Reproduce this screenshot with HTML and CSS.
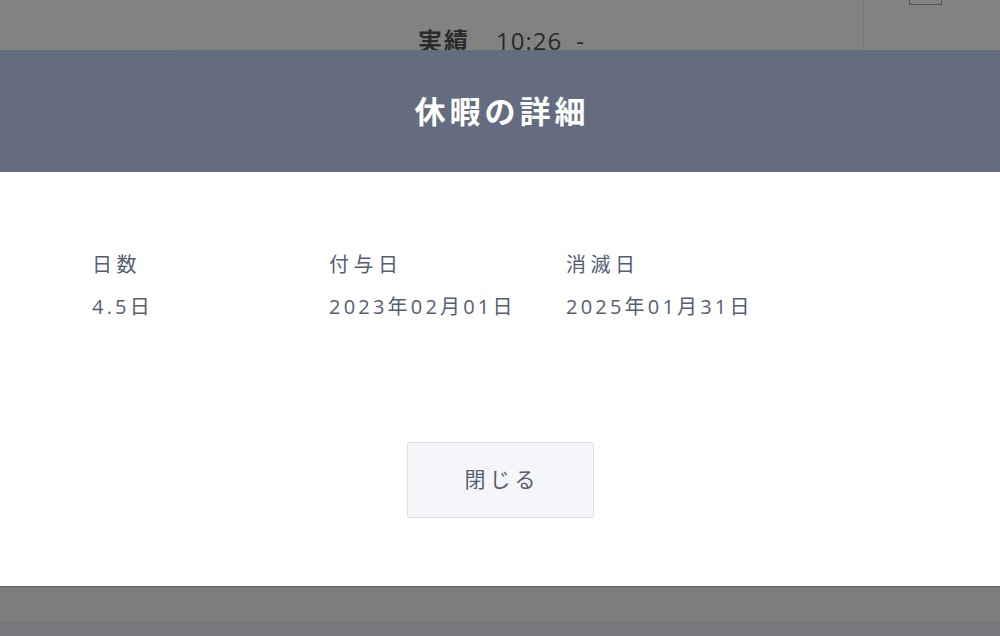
FILE: index.html
```html
<!DOCTYPE html>
<html lang="ja">
<head>
<meta charset="utf-8">
<link rel="stylesheet" href="styles.css">
</head>
<body>
<div class="page">
  <div class="side"></div>
  <div class="main">
    <div class="actual"><span class="lbl">実績</span><span class="time">10:26</span><span class="dash">-</span></div>
  </div>
  <div class="gap-col"></div>
  <div class="right">
    <div class="mini-icon"></div>
  </div>
</div>
<div class="bottom-area"><div class="bottom-strip"></div></div>
<div class="modal">
  <div class="modal-head">休暇の詳細</div>
  <div class="modal-body">
    <div class="fields">
      <div class="field f1">
        <div class="f-label">日数</div>
        <div class="f-value">4.5日</div>
      </div>
      <div class="field f2">
        <div class="f-label">付与日</div>
        <div class="f-value">2023年02月01日</div>
      </div>
      <div class="field f3">
        <div class="f-label">消滅日</div>
        <div class="f-value">2025年01月31日</div>
      </div>
    </div>
    <div class="actions">
      <button class="close-btn">閉じる</button>
    </div>
  </div>
</div>
</body>
</html>
```
FILE: styles.css
```css
html, body {
  margin: 0;
  padding: 0;
  width: 1000px;
  height: 636px;
  overflow: hidden;
  background: #808080;
  font-family: "Open Sans", "Noto Sans CJK JP", sans-serif;
}
.page {
  display: flex;
  height: 636px;
}
.side {
  width: 177px;
  border-right: 1px solid #7b7b7b;
  background: #838383;
}
.main {
  width: 650px;
  border-right: 1px solid #7d7d7d;
  background: #828282;
}
.gap-col {
  width: 34px;
  border-right: 1px solid #7a7a7a;
  background: #828282;
}
.actual {
  padding: 26px 0 0 240px;
  color: #2a2a2a;
  font-size: 24px;
  line-height: 30px;
  font-weight: 700;
  letter-spacing: 2px;
}
.actual .time {
  margin-left: 26px;
  font-weight: 400;
  letter-spacing: 1px;
}
.actual .dash {
  margin-left: 14px;
  font-weight: 400;
}
.right {
  flex: 1;
  background: #838383;
}
.mini-icon {
  width: 31px;
  height: 4px;
  margin: 0 0 0 45px;
  border: 1px solid #555;
  border-top: none;
}
.bottom-area {
  position: absolute;
  left: 0;
  top: 586px;
  width: 1000px;
  height: 50px;
  background: #7d7d7d;
  display: flex;
  flex-direction: column;
  justify-content: flex-end;
}
.bottom-strip {
  height: 13px;
  background: #79787e;
  border-top: 1px solid #747378;
}
.modal {
  position: absolute;
  left: 0;
  top: 50px;
  width: 1000px;
  height: 536px;
  display: flex;
  flex-direction: column;
  box-shadow: 0 1px 1px rgba(0,0,0,0.2);
}
.modal-head {
  height: 122px;
  background: #646d80;
  color: #fff;
  font-family: "Noto Sans CJK JP", sans-serif;
  font-size: 31px;
  font-weight: 700;
  letter-spacing: 4px;
  display: flex;
  align-items: center;
  justify-content: center;
  padding: 0 0 4px 4px;
  box-sizing: border-box;
}
.modal-body {
  flex: 1;
  background: #fff;
  padding: 78px 0 0 92px;
}
.fields {
  display: flex;
}
.field {
  display: flex;
  flex-direction: column;
  gap: 12px;
  color: #555e72;
}
.f1 { width: 237px; }
.f2 { width: 237px; }
.f-label {
  font-size: 20px;
  letter-spacing: 4.5px;
  line-height: 30px;
}
.f-value {
  font-size: 20px;
  letter-spacing: 3.2px;
  line-height: 30px;
}
.actions {
  display: flex;
  justify-content: center;
  padding-top: 120px;
  padding-right: 92px;
}
.close-btn {
  width: 187px;
  height: 76px;
  background: #f5f6fa;
  border: 1px solid #dcdfe6;
  border-radius: 3px;
  color: #555e72;
  font-family: "Noto Sans CJK JP", sans-serif;
  font-size: 21px;
  letter-spacing: 4px;
  padding: 0 0 4px 4px;
}
```
